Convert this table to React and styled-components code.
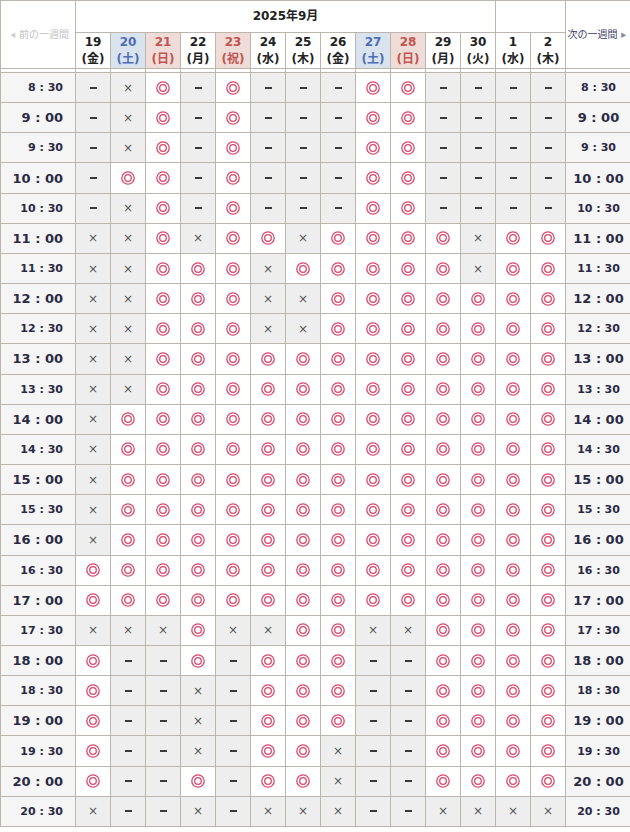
import React from "react";
import styled, { createGlobalStyle } from "styled-components";

const GlobalStyle = createGlobalStyle`
  html, body { margin: 0; padding: 0; background: #fff; }
  body {
    font-family: "DejaVu Sans", "Noto Sans CJK JP", sans-serif;
    overflow: hidden;
  }
`;

const Line = "#bcb5ab";

const Table = styled.table`
  border-collapse: collapse;
  table-layout: fixed;
  width: 631px;
  color: #222;
`;

const Th = styled.th`
  border: 1px solid ${Line};
  padding: 0;
  font-size: 12px;
  font-weight: bold;
  text-align: center;
  vertical-align: middle;
  line-height: 16.5px;
  background: ${(p) => (p.$kind === "sat" ? "#d9e3ed" : p.$kind === "sun" ? "#efdcd8" : "#fff")};
  color: ${(p) => (p.$kind === "sat" ? "#4d6cb5" : p.$kind === "sun" ? "#c2544f" : "#222")};
`;

const HeadRow1 = styled.tr`
  height: 32px;
`;

const HeadRow2 = styled.tr`
  height: 36px;
`;

const SpacerRow = styled.tr`
  height: 4px;
  td {
    border: 1px solid ${Line};
    padding: 0;
    height: 3px;
    background: #fff;
  }
`;

const BodyRow = styled.tr`
  height: 30.17px;
`;

const NavCell = styled(Th)`
  font-size: 10px;
  font-weight: normal;
  font-family: "Noto Sans CJK JP", sans-serif;
  white-space: nowrap;
  color: ${(p) => (p.$disabled ? "#c3c3c3" : "#3b3b6b")};
`;

const Arrow = styled.span`
  font-size: 6px;
  color: ${(p) => (p.$disabled ? "#d0d0d0" : "#8a88a8")};
  margin: 0 3px;
  vertical-align: 1px;
`;

const TimeCell = styled.td`
  border: 1px solid ${Line};
  background: #f5f5f5;
  padding: ${(p) => (p.$side === "left" ? "0 12px 0 0" : "0")};
  text-align: ${(p) => (p.$side === "left" ? "right" : "center")};
  font-weight: bold;
  font-size: ${(p) => (p.$hour ? "13px" : "11px")};
  color: #2a2a44;
  white-space: pre;
`;

const SlotCell = styled.td`
  border: 1px solid ${Line};
  padding: 0;
  text-align: center;
  vertical-align: middle;
  background: ${(p) => (p.$open ? "#fff" : "#eeeeee")};
  line-height: 0;
`;

const Cross = styled.span`
  display: inline-block;
  font-size: 12px;
  line-height: 14px;
  color: #555;
`;

const Dash = styled.span`
  display: inline-block;
  width: 7px;
  height: 2px;
  background: #3a3a3a;
  vertical-align: middle;
`;

const days = [
  ["19", "金", ""],
  ["20", "土", "sat"],
  ["21", "日", "sun"],
  ["22", "月", ""],
  ["23", "祝", "sun"],
  ["24", "水", ""],
  ["25", "木", ""],
  ["26", "金", ""],
  ["27", "土", "sat"],
  ["28", "日", "sun"],
  ["29", "月", ""],
  ["30", "火", ""],
  ["1", "水", ""],
  ["2", "木", ""],
];

// o = ◎, x = ×, - = −
const rows = [
  ["8 : 30", "-xo-o---oo----"],
  ["9 : 00", "-xo-o---oo----"],
  ["9 : 30", "-xo-o---oo----"],
  ["10 : 00", "-oo-o---oo----"],
  ["10 : 30", "-xo-o---oo----"],
  ["11 : 00", "xxoxooxooooxoo"],
  ["11 : 30", "xxoooxoooooxoo"],
  ["12 : 00", "xxoooxxooooooo"],
  ["12 : 30", "xxoooxxooooooo"],
  ["13 : 00", "xxoooooooooooo"],
  ["13 : 30", "xxoooooooooooo"],
  ["14 : 00", "xooooooooooooo"],
  ["14 : 30", "xooooooooooooo"],
  ["15 : 00", "xooooooooooooo"],
  ["15 : 30", "xooooooooooooo"],
  ["16 : 00", "xooooooooooooo"],
  ["16 : 30", "oooooooooooooo"],
  ["17 : 00", "oooooooooooooo"],
  ["17 : 30", "xxxoxxooxxoooo"],
  ["18 : 00", "o--o-ooo--oooo"],
  ["18 : 30", "o--x-ooo--oooo"],
  ["19 : 00", "o--x-ooo--oooo"],
  ["19 : 30", "o--x-oox--oooo"],
  ["20 : 00", "o--o-oox--oooo"],
  ["20 : 30", "x--x-xxx--xxxx"],
];

function Circle() {
  return (
    <svg width="14" height="14" viewBox="0 0 14 14" style={{ verticalAlign: "middle" }}>
      <circle cx="7" cy="7" r="6.2" fill="none" stroke="#d9476b" strokeWidth="1.3" />
      <circle cx="7" cy="7" r="3.3" fill="none" stroke="#d9476b" strokeWidth="1.3" />
    </svg>
  );
}

function Mark({ m }) {
  if (m === "o") return <Circle />;
  if (m === "x") return <Cross>×</Cross>;
  return <Dash />;
}

export default function App() {
  return (
    <>
      <GlobalStyle />
      <Table>
        <colgroup>
          <col style={{ width: 75 }} />
          {days.map((d) => (
            <col key={d[0]} style={{ width: 35 }} />
          ))}
          <col style={{ width: 66 }} />
        </colgroup>
        <thead>
          <HeadRow1>
            <NavCell rowSpan={2} $disabled>
              <Arrow $disabled>◀</Arrow>前の一週間
            </NavCell>
            <Th colSpan={12}>2025年9月</Th>
            <Th colSpan={2}></Th>
            <NavCell rowSpan={2}>
              次の一週間<Arrow>▶</Arrow>
            </NavCell>
          </HeadRow1>
          <HeadRow2>
            {days.map(([n, w, k]) => (
              <Th key={n} $kind={k}>
                {n}
                <br />({w})
              </Th>
            ))}
          </HeadRow2>
          <SpacerRow>
            <td />
            {days.map((d) => (
              <td key={d[0]} />
            ))}
            <td />
          </SpacerRow>
        </thead>
        <tbody>
          {rows.map(([t, marks]) => {
            const hour = t.endsWith("00");
            return (
              <BodyRow key={t}>
                <TimeCell $side="left" $hour={hour}>{t}</TimeCell>
                {marks.split("").map((m, i) => (
                  <SlotCell key={i} $open={m === "o"}>
                    <Mark m={m} />
                  </SlotCell>
                ))}
                <TimeCell $side="right" $hour={hour}>{t}</TimeCell>
              </BodyRow>
            );
          })}
        </tbody>
      </Table>
    </>
  );
}
